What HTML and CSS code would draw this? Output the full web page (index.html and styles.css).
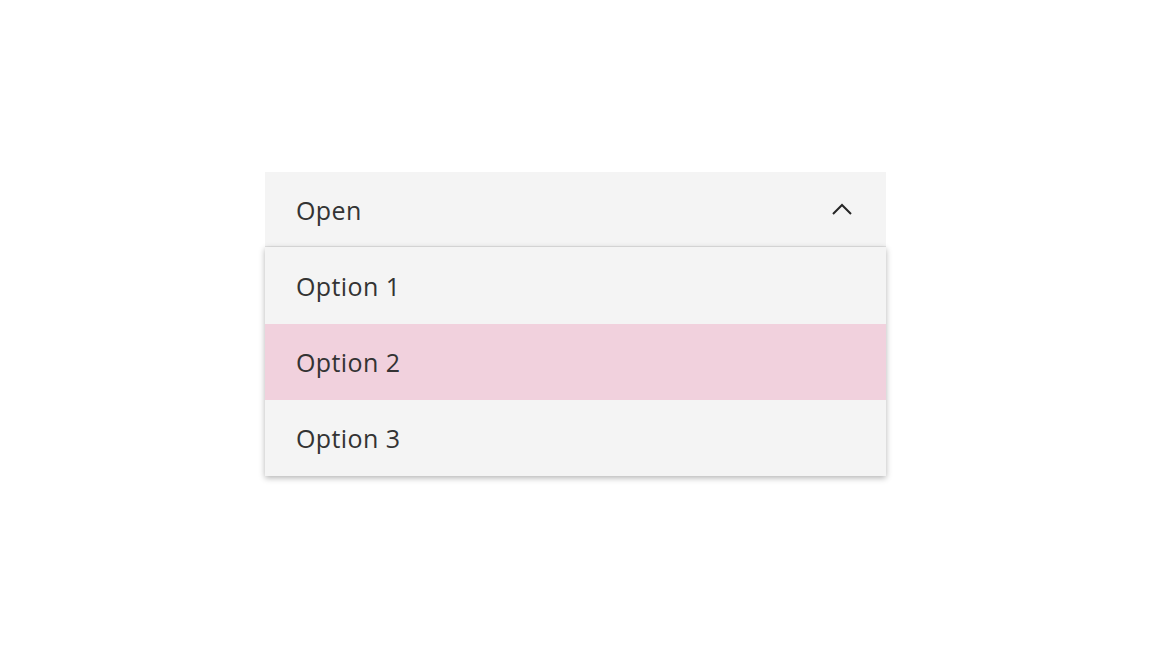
FILE: index.html
```html
<!DOCTYPE html>
<html lang="en">
<head>
<meta charset="utf-8">
<title>Dropdown</title>
<link rel="stylesheet" href="styles.css">
</head>
<body>
<div class="page">
  <div class="dropdown">
    <div class="field">
      <span class="field-label">Open</span>
      <svg class="chevron" width="20" height="12" viewBox="0 0 20 12" aria-hidden="true">
        <path d="M1 11 L10 2 L19 11" fill="none" stroke="#262626" stroke-width="2"/>
      </svg>
    </div>
    <ul class="menu">
      <li class="item">Option 1</li>
      <li class="item item-active">Option 2</li>
      <li class="item">Option 3</li>
    </ul>
  </div>
</div>
</body>
</html>
```

FILE: styles.css
```css
html, body {
  margin: 0;
  padding: 0;
  background: #ffffff;
}
.page {
  width: 1152px;
  height: 648px;
  display: flex;
  justify-content: flex-start;
  padding: 172px 0 0 265px;
  box-sizing: border-box;
}
.dropdown {
  width: 621px;
  font-family: "Open Sans", "Noto Sans", sans-serif;
  font-size: 25px;
  color: #333333;
  letter-spacing: 0.4px;
}
.field {
  height: 74px;
  background: #f4f4f4;
  border-bottom: 1px solid #e2e2e2;
  display: flex;
  align-items: center;
  justify-content: space-between;
  padding: 0 34px 0 31px;
}
.field-label {
  line-height: 1;
  margin-top: 2px;
}
.chevron {
  display: block;
}
.menu {
  list-style: none;
  margin: 0;
  padding: 1px 0 0;
  background: #f4f4f4;
  box-shadow: 0 2px 6px rgba(0, 0, 0, 0.3);
}
.item {
  height: 76px;
  display: flex;
  align-items: center;
  padding-left: 31px;
}
.item-active {
  background: #f1d1dd;
}
```
